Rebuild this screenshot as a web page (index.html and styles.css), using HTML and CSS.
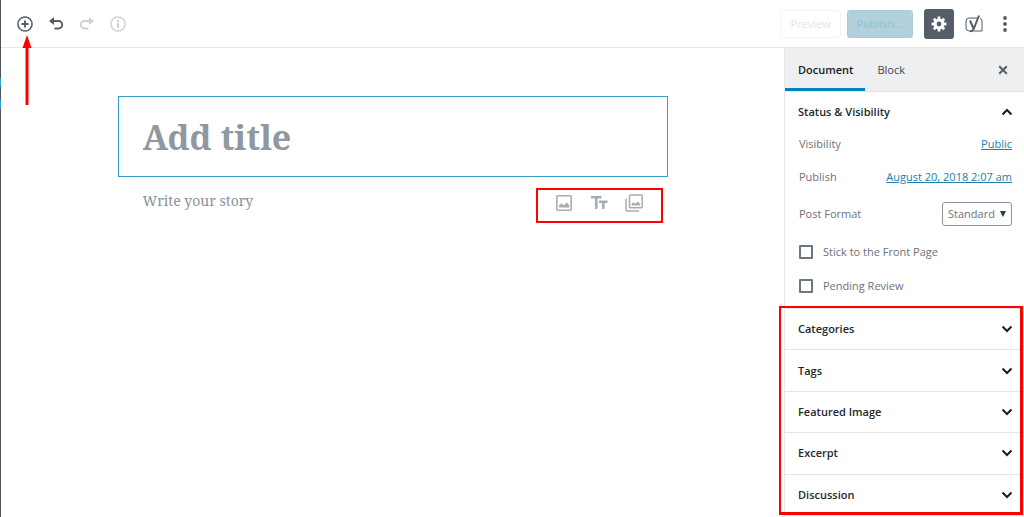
FILE: index.html
```html
<!DOCTYPE html>
<html lang="en">
<head>
<meta charset="utf-8">
<meta name="viewport" content="width=device-width, initial-scale=1">
<title>Add New Post</title>
<link rel="stylesheet" href="styles.css">
</head>
<body>
<div class="admin-edge"><span class="edge-mark"></span><span class="edge-mark"></span></div>
<div class="editor">
  <header class="toolbar">
    <div class="tools">
      <button class="icon-button" type="button" aria-label="Add block">
        <svg viewBox="0 0 18 18" width="18" height="18" fill="none" stroke="currentColor"><circle cx="9" cy="9" r="7.1" stroke-width="1.5"/><path d="M9 5.5v7M5.5 9h7" stroke-width="1.9"/></svg>
        <svg class="arrow" viewBox="0 0 10 70" width="10" height="70" aria-hidden="true"><path d="M5 0l4.500 13H6.500v57h-3V13H.5z" fill="#f00"/></svg>
      </button>
      <button class="icon-button" type="button" aria-label="Undo">
        <svg viewBox="0 0 18 18" width="18" height="18"><path d="M2 6l5-4v3h4.500a4.700 4.700 0 0 1 0 9.400H7.500v-2h4a2.700 2.700 0 0 0 0-5.400H7v3z" fill="currentColor"/></svg>
      </button>
      <button class="icon-button" type="button" aria-label="Redo" disabled>
        <svg viewBox="0 0 18 18" width="18" height="18"><path d="M16 6l-5-4v3H6.500a4.700 4.700 0 0 0 0 9.400h4v-2h-4a2.700 2.700 0 0 1 0-5.400H11v3z" fill="currentColor"/></svg>
      </button>
      <button class="icon-button" type="button" aria-label="Content structure" disabled>
        <svg viewBox="0 0 18 18" width="18" height="18"><circle cx="9" cy="9" r="7.100" fill="none" stroke="currentColor" stroke-width="1.500"/><path d="M8 8h2v5H8zM8 5h2v2H8z" fill="currentColor"/></svg>
      </button>
    </div>
    <div class="actions">
      <button class="preview" type="button" disabled>Preview</button>
      <button class="publish" type="button" disabled>Publish...</button>
      <button class="settings" type="button" aria-label="Settings">
        <svg viewBox="0 0 16 16" width="16" height="16" fill="none" stroke="currentColor"><circle cx="8" cy="8" r="3.900" stroke-width="3"/><path d="M8 .6v3M8 12.400v3M.6 8h3M12.400 8h3M2.800 2.800l2 2M11.200 11.200l2 2M2.800 13.200l2-2M11.200 4.800l2-2" stroke-width="2.800"/></svg>
      </button>
      <button class="icon-button" type="button" aria-label="Yoast SEO">
        <svg viewBox="0 0 18 20" width="18" height="20" fill="none" stroke="currentColor"><path d="M12 4H4a3 3 0 0 0-3 3v7a3 3 0 0 0 3 3h13V7a3 3 0 0 0-2-2.700" stroke-width="1"/><path d="M5 6.500l3.300 7.500M14 1.500L9.300 13.500Q8 17.300 5 17.300" stroke-width="2"/></svg>
      </button>
      <button class="icon-button more" type="button" aria-label="More">
        <svg viewBox="0 0 6 18" width="6" height="18" fill="currentColor"><circle cx="3" cy="3" r="1.900"/><circle cx="3" cy="9" r="1.900"/><circle cx="3" cy="15" r="1.900"/></svg>
      </button>
    </div>
  </header>
  <div class="workspace">
    <main class="canvas">
      <div class="post">
        <input class="title" type="text" placeholder="Add title" aria-label="Add title">
        <div class="story-row">
          <input class="story" type="text" placeholder="Write your story" aria-label="Write your story">
          <div class="quick-blocks">
            <button class="icon-button" type="button" aria-label="Image">
              <svg viewBox="0 0 18 18" width="18" height="18"><rect x="1.800" y="1.800" width="14.400" height="14.400" rx="1" fill="none" stroke="currentColor" stroke-width="1.600"/><path d="M4 13.500v-2l2.500-2.200 2 1.900L12 8.500l2.300 3v2z" fill="currentColor"/></svg>
            </button>
            <button class="icon-button" type="button" aria-label="Heading">
              <svg viewBox="0 0 18 18" width="18" height="18" fill="currentColor"><path d="M1 2h10.500v2.600H7.600V15H4.900V4.600H1zM9 6.500h8.500V9h-2.900v6H12V9H9z"/></svg>
            </button>
            <button class="icon-button" type="button" aria-label="Gallery">
              <svg viewBox="0 0 18 18" width="18" height="18"><g fill="none" stroke="currentColor" stroke-width="1.500"><rect x="4.500" y="1" width="12.700" height="12.700" rx="1"/><path d="M1 4.500V16a1 1 0 0 0 1 1h12"/></g><path d="M6.500 11.500V10l2-1.800 1.700 1.500L13 7.500l2.200 2.500v1.500z" fill="currentColor"/></svg>
            </button>
          </div>
        </div>
      </div>
    </main>
    <aside class="sidebar">
      <div class="tabs">
        <button class="tab active" type="button">Document</button>
        <button class="tab" type="button">Block</button>
        <button class="icon-button close" type="button" aria-label="Close settings">
          <svg viewBox="0 0 10 10" width="10" height="10" fill="none" stroke="currentColor" stroke-width="2"><path d="M1.200 1.200l7.600 7.600M8.800 1.200l-7.600 7.600"/></svg>
        </button>
      </div>
      <section class="status">
        <button class="panel-toggle" type="button">Status &amp; Visibility
          <svg viewBox="0 0 12 8" width="12" height="8"><path d="M1.500 6.500L6 2l4.500 4.500"/></svg>
        </button>
        <div class="fields">
          <div class="field"><span>Visibility</span><a href="#">Public</a></div>
          <div class="field"><span>Publish</span><a href="#">August 20, 2018 2:07 am</a></div>
          <div class="field format">
            <label for="format">Post Format</label>
            <div class="select-wrap">
              <select id="format"><option>Standard</option></select>
              <svg viewBox="0 0 6 6" width="6" height="6"><path d="M0 0h6L3 6z" fill="#32373c"/></svg>
            </div>
          </div>
          <label class="check"><input type="checkbox">Stick to the Front Page</label>
          <label class="check"><input type="checkbox">Pending Review</label>
        </div>
      </section>
      <div class="panels">
        <button class="panel-toggle" type="button">Categories <svg viewBox="0 0 12 8" width="12" height="8"><path d="M1.500 1.500L6 6l4.500-4.500"/></svg></button>
        <button class="panel-toggle" type="button">Tags <svg viewBox="0 0 12 8" width="12" height="8"><path d="M1.500 1.500L6 6l4.500-4.500"/></svg></button>
        <button class="panel-toggle" type="button">Featured Image <svg viewBox="0 0 12 8" width="12" height="8"><path d="M1.500 1.500L6 6l4.500-4.500"/></svg></button>
        <button class="panel-toggle" type="button">Excerpt <svg viewBox="0 0 12 8" width="12" height="8"><path d="M1.500 1.500L6 6l4.500-4.500"/></svg></button>
        <button class="panel-toggle" type="button">Discussion <svg viewBox="0 0 12 8" width="12" height="8"><path d="M1.500 1.500L6 6l4.500-4.500"/></svg></button>
        <div class="highlight"></div>
      </div>
    </aside>
  </div>
</div>
</body>
</html>
```
FILE: styles.css
```css
* { box-sizing: border-box; }
body {
  margin: 0;
  min-height: 100vh;
  display: flex;
  background: #fff;
  color: #555d66;
  font: 11px/16px "Open Sans", "Noto Sans", sans-serif;
}
button, input, select { font: inherit; color: inherit; margin: 0; }
button { border: 0; padding: 0; background: none; }
svg { display: block; flex: none; }

.admin-edge {
  flex: 0 0 1px;
  display: flex;
  flex-direction: column;
  gap: 13px;
  padding-top: 78px;
  background: #50555b;
}
.edge-mark { height: 9px; background: #2d9fd0; }

.editor { flex: 1; min-width: 0; display: flex; flex-direction: column; }

.toolbar {
  display: flex;
  justify-content: space-between;
  align-items: center;
  height: 48px;
  padding: 0 10px 0 15px;
  border-bottom: 1px solid #e6e8ea;
}
.tools { display: flex; gap: 13px; }
.actions { display: flex; align-items: center; }
.icon-button { position: relative; display: flex; align-items: center; justify-content: center; }
.icon-button:disabled { color: #cfd2d5; }
.arrow { position: absolute; left: 6px; top: 20px; z-index: 2; }
.preview, .publish { height: 28px; border-radius: 3px; border: 1px solid; }
.preview { padding: 0 9px; margin-right: 6px; color: #e2e4e6; border-color: #f3f4f5; }
.publish { padding: 0 9px; margin-right: 11px; color: #8cc2d5; background: #b3d1dc; border-color: #a8cbd8; }
.settings {
  display: flex;
  align-items: center;
  justify-content: center;
  width: 30px;
  height: 30px;
  margin-right: 11px;
  border-radius: 3px;
  color: #fff;
  background: #555d66;
}
.more { width: 18px; margin-left: 13px; }

.workspace { flex: 1; display: flex; }
.canvas { flex: 1; min-width: 0; padding: 48px 24px 0; }
.post { max-width: 550px; margin: 0 auto; }
.title {
  display: block;
  width: 100%;
  height: 81px;
  padding: 0 24px;
  border: 1px solid #3a9bc4;
  outline: 0;
  font: bold 34px/48px "Noto Serif", "DejaVu Serif Condensed", "DejaVu Serif", serif;
}
.title::placeholder { color: #8f98a1; opacity: 1; }
.story-row { display: flex; align-items: center; padding: 11px 5px 0 25px; }
.story {
  flex: 1;
  min-width: 0;
  height: 24px;
  margin-bottom: 10px;
  padding: 0;
  border: 0;
  outline: 0;
  font: 14px/24px "Noto Serif", "DejaVu Serif Condensed", "DejaVu Serif", serif;
}
.story::placeholder { color: #8a9198; opacity: 1; }
.quick-blocks {
  display: flex;
  align-items: center;
  justify-content: space-between;
  width: 127px;
  height: 35px;
  padding: 0 18px 5px 17px;
  border: 2px solid #f00;
  color: #a6adb4;
}

.sidebar {
  flex: 0 0 240px;
  display: flex;
  flex-direction: column;
  border-left: 1px solid #e6e8ea;
  color: #6c7278;
}
.tabs {
  display: flex;
  height: 44px;
  padding-right: 16px;
  background: #edeff0;
  border-bottom: 1px solid #e2e4e7;
  color: #40464d;
}
.tab { padding: 3px 12px 0; border-bottom: 3px solid transparent; }
.active { padding-left: 13px; color: #191e23; font-weight: 600; border-color: #0085ba; }
.close { margin-left: auto; color: #555d66; }
.panel-toggle {
  display: flex;
  align-items: center;
  justify-content: space-between;
  width: 100%;
  padding: 0 11px 0 13px;
  color: #23282d;
  font-weight: 600;
}
.panel-toggle svg { fill: none; stroke: #191e23; stroke-width: 2; }
.status { border-bottom: 1px solid #e6e8ea; }
.status .panel-toggle { height: 40px; }
.fields { padding: 4px 12px 13px 14px; }
.field { display: flex; align-items: center; justify-content: space-between; height: 16px; margin-bottom: 17px; }
.field a { color: #207fae; }
.format { height: 24px; }
.select-wrap { display: grid; align-items: center; }
.select-wrap select, .select-wrap svg { grid-area: 1 / 1; }
.select-wrap svg { justify-self: end; margin-right: 6px; pointer-events: none; }
.select-wrap select {
  appearance: none;
  height: 24px;
  padding: 0 16px 0 5px;
  border: 1px solid #8d96a0;
  border-radius: 3px;
  background: #fff;
}
.check { display: flex; align-items: center; gap: 10px; height: 18px; }
.check + .check { margin-top: 16px; }
.check input {
  appearance: none;
  width: 14px;
  height: 14px;
  border: 2px solid #6c7781;
  border-radius: 1px;
  background: #fff;
}
.panels {
  position: relative;
  flex: 1;
  display: grid;
  grid-auto-rows: minmax(40px, 1fr);
  padding-bottom: 1px;
}
.panels .panel-toggle { border-bottom: 1px solid #e2e4e7; }
.highlight {
  position: absolute;
  inset: -3px 1px 2px -6px;
  border: 2px solid #f00;
  border-width: 2px 3px 3px 2px;
  pointer-events: none;
}
```
